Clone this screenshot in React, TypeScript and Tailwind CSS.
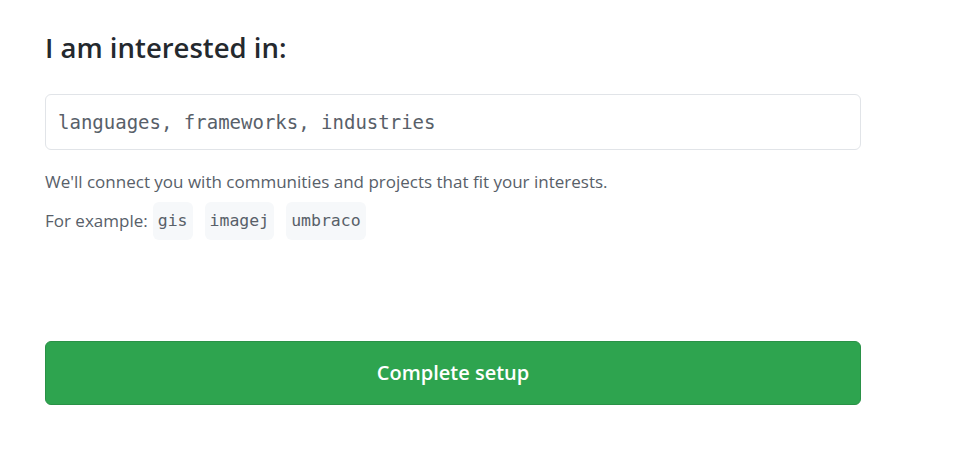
export default function App() {
  const examples = ["gis", "imagej", "umbraco"]

  return (
    <div className="min-h-screen bg-white px-[45px] pt-[30px] font-['Open_Sans',sans-serif] text-[#24292e]">
      <div className="w-[816px]">
        <h2 className="text-[27.5px] font-semibold leading-[36px]">I am interested in:</h2>

        <input
          type="text"
          placeholder="languages, frameworks, industries"
          className="mt-[28px] block h-[56px] w-full rounded-md border border-[#e1e4e8] px-[12px] font-['DejaVu_Sans_Mono',monospace] text-[19px] text-[#24292e] outline-none placeholder:text-[#586069]"
        />

        <p className="mt-[20px] text-[17px] leading-[24px] text-[#586069]">
          We'll connect you with communities and projects that fit your interests.
        </p>

        <div className="mt-[8px] flex items-center gap-[12px] text-[17px] text-[#586069]">
          <span className="-mr-[7px]">For example:</span>
          {examples.map((ex) => (
            <span
              key={ex}
              className="flex h-[38px] items-center rounded-md bg-[#f6f8fa] px-[5px] font-['DejaVu_Sans_Mono',monospace] text-[16.5px] text-[#586069]"
            >
              {ex}
            </span>
          ))}
        </div>

        <button className="mt-[101px] flex h-[64px] w-full items-center justify-center rounded-md border border-[#2a9147] bg-[#2ea44f] text-[20px] font-semibold text-white">
          Complete setup
        </button>
      </div>
    </div>
  )
}
